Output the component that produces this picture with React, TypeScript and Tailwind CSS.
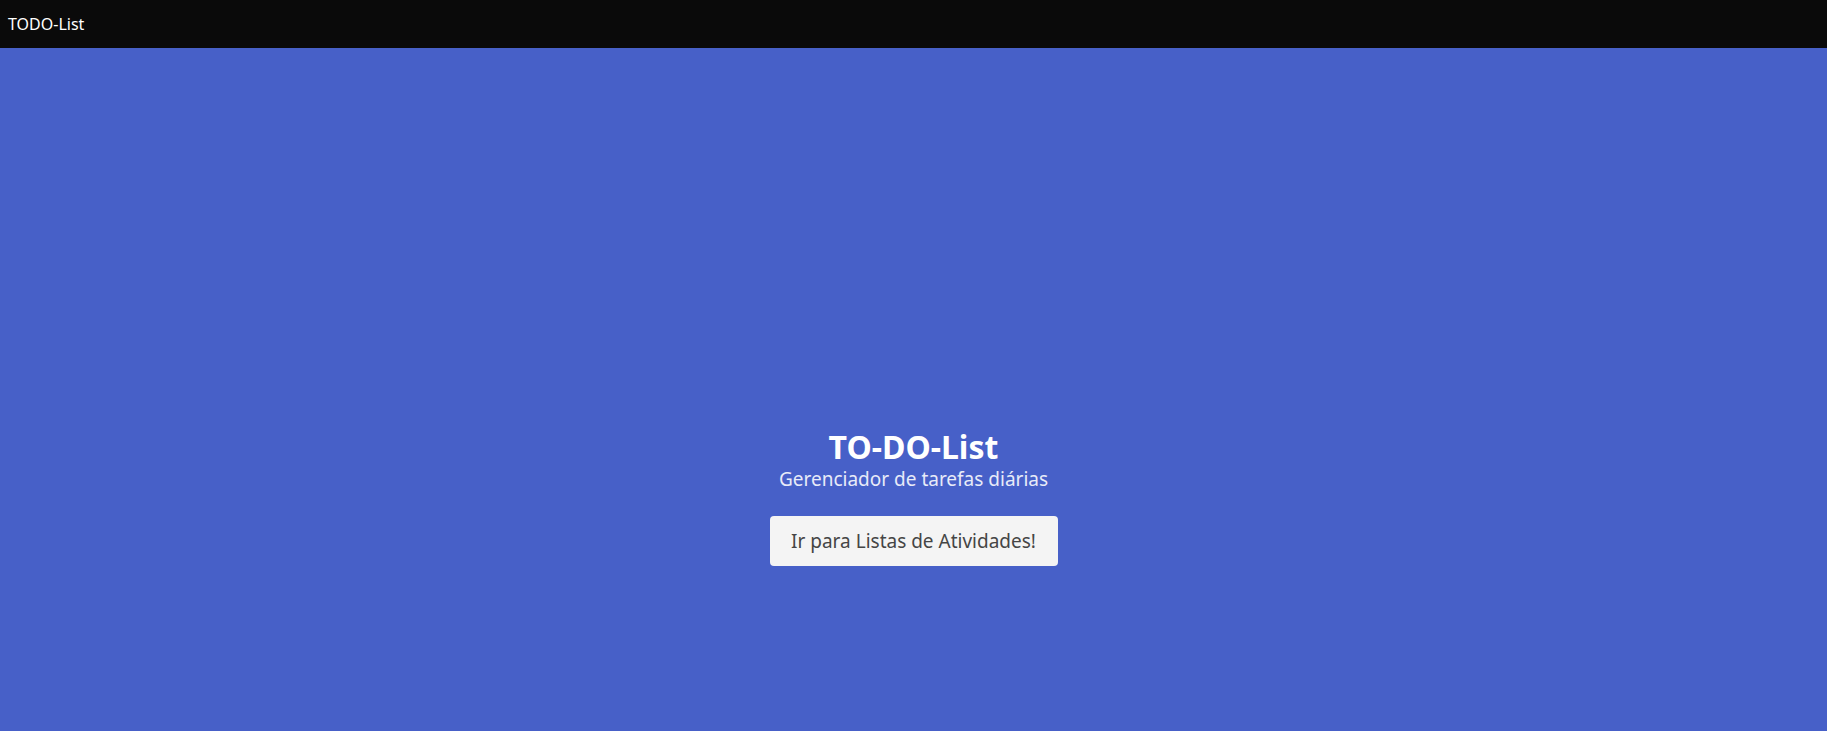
export default function App() {
  return (
    <div className="min-h-screen flex flex-col bg-[#4760c8] font-['Noto_Sans',sans-serif]">
      <header className="h-12 bg-[#0a0a0a] flex items-center px-2">
        <span className="text-white text-[16px]">TODO-List</span>
      </header>
      <main className="flex flex-col items-center pt-[380px] text-white">
        <h1 className="text-[32px] font-bold leading-[38px]">TO-DO-List</h1>
        <p className="text-[19px] leading-[26px] text-[#e8ebf8]">Gerenciador de tarefas diárias</p>
        <button className="mt-[24px] w-[288px] h-[50px] rounded-[4px] bg-[#f4f4f4] text-[#454545] text-[19px]">
          Ir para Listas de Atividades!
        </button>
      </main>
    </div>
  );
}
